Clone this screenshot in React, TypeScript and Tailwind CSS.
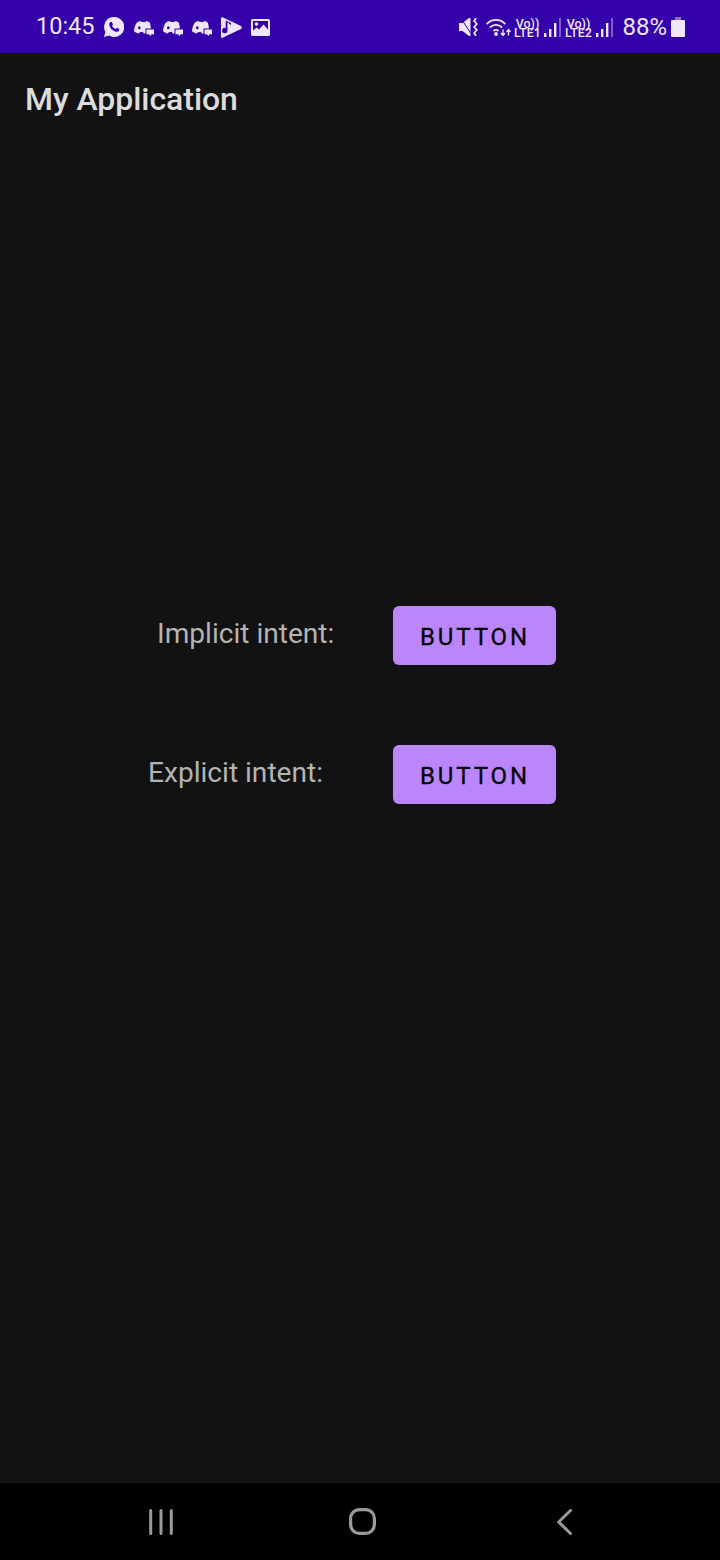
const Discord = () => (
  <svg width="20" height="15" viewBox="0 0 20 15" className="fill-[#efe6ff]">
    <path d="M3 1.500C4.600.5 5.900.1 7 0l.6 1h3.800l.6-1c1.300.1 2.600.6 3.700 1.500C16.300 3 16.800 5.300 16.900 7.500H11.500V12.500H9.800L8.800 10.800C8 11.100 6.800 11.200 6 11.100L4.800 12.500C3 12.200 1 11.300 0 10 0 7 1.300 3.500 3 1.500Z" />
    <ellipse cx="5.300" cy="6.700" rx="1.300" ry="1.500" className="fill-[#3300aa]" />
    <path d="M12.500 8.500H20V13.300H17.600L16.300 15 15 13.300H12.500Z" />
  </svg>
);

const Signal = () => (
  <svg width="17" height="19" viewBox="0 0 17 19">
    <rect x="0" y="15" width="2.400" height="4" fill="#efe6ff" />
    <rect x="5" y="11" width="2.400" height="8" fill="#efe6ff" />
    <rect x="10" y="5" width="2.400" height="14" fill="#efe6ff" />
    <rect x="15" y="0" width="2" height="19" fill="#7d5cd0" />
  </svg>
);

const VoLte = ({ label }: { label: string }) => (
  <div className="flex w-[26px] flex-col items-center pt-[2px] font-['Roboto',sans-serif] text-[12.500px] leading-[9px] font-medium text-[#efe6ff]">
    <span>Vo))</span>
    <span>{label}</span>
  </div>
);

const StatusBar = () => (
  <div className="flex h-[53px] items-center justify-between bg-[#3300aa] pt-px pr-[35px] pl-[36px] text-[#efe6ff]">
    <div className="flex items-center">
      <span className="font-['Roboto',sans-serif] text-[23.500px] leading-none">10:45</span>
      <svg width="20" height="20" viewBox="0 0 20 20" className="ml-[9px]">
        <path d="M10 0a10 10 0 0 0-8.600 15L0 20l5.200-1.400A10 10 0 1 0 10 0Z" fill="#efe6ff" />
        <path d="M6.500 5c-.8.500-1.300 1.400-1.200 2.600.3 3.400 3.500 6.700 7 7.200 1.300.2 2.300-.4 2.800-1.300l.2-1.400-2.500-1.300-1.200 1.300c-1.500-.6-2.900-1.900-3.600-3.400l1-1.200L7.900 5Z" fill="#3300aa" />
      </svg>
      <div className="ml-[10px] flex items-center gap-[9px] pt-[2px]">
        <Discord />
        <Discord />
        <Discord />
      </div>
      <svg width="21" height="21" viewBox="0 0 21 21" className="ml-[9px]">
        <path d="M0 1.500C0 .4 1 0 2 .5l18 8.500c1.200.6 1.200 2.400 0 3L2 20.500c-1 .5-2 .1-2-1Z" fill="#efe6ff" />
        <path d="M6.500 5v8.500a2.700 2.700 0 1 1-1.800-2.500V3.500l5.300 2.500v2.300Z" fill="#3300aa" />
      </svg>
      <svg width="19" height="17" viewBox="0 0 19 17" className="ml-[9px]">
        <rect width="19" height="17" rx="1.500" fill="#efe6ff" />
        <path d="M2 11.500l3.500-3 2.500 2 4.500-5 4.500 5V2H2Z" fill="#3300aa" />
        <circle cx="5.500" cy="5" r="1.800" fill="#efe6ff" />
      </svg>
    </div>
    <div className="flex items-center">
      <svg width="20" height="18" viewBox="0 0 20 18">
        <path d="M0 5h3.500L10 0h1.500v18H10L3.500 13H0Z" fill="#efe6ff" />
        <path d="M2 .5l10 15" stroke="#3300aa" strokeWidth="1" />
        <path d="M17 0l-1.800 3 2.600 3-2.600 3 2.600 3-2.600 3L17 18" stroke="#efe6ff" strokeWidth="1.800" fill="none" />
      </svg>
      <svg width="25" height="18" viewBox="0 0 25 18" className="ml-[7px]" fill="none" stroke="#efe6ff" strokeWidth="1.800">
        <path d="M.7 6C6 .6 14 .6 19.300 6" />
        <path d="M4 9.500c3.400-3.400 8.600-3.400 12 0" />
        <path d="M7.500 13c1.500-1.500 3.500-1.500 5 0" />
        <circle cx="10" cy="16" r="1" fill="#efe6ff" />
        <path d="M17 11.500v5.500M15 15l2 2.500 2-2.500M22.500 17.500v-5.500M20.500 14l2-2.500 2 2.500" strokeWidth="1.300" />
      </svg>
      <div className="ml-[3px]">
        <VoLte label="LTE1" />
      </div>
      <div className="ml-[4px]">
        <Signal />
      </div>
      <div className="ml-[4px]">
        <VoLte label="LTE2" />
      </div>
      <div className="ml-[5px]">
        <Signal />
      </div>
      <span className="ml-[9px] font-['Roboto',sans-serif] text-[24px] leading-none">88%</span>
      <svg width="14" height="20" viewBox="0 0 14 20" className="ml-[4px]">
        <path d="M4 0h6v3H4Z" fill="#8d6fd6" />
        <path d="M1 3h12a1 1 0 0 1 1 1v15a1 1 0 0 1-1 1H1a1 1 0 0 1-1-1V4a1 1 0 0 1 1-1Z" fill="#efe6ff" />
      </svg>
    </div>
  </div>
);

const IntentRow = ({ label, offset }: { label: string; offset: string }) => (
  <div className="flex items-start">
    <div className={`w-[393px] font-['Roboto',sans-serif] text-[28.100px] leading-[56px] text-[#b4b4b4] ${offset}`}>
      {label}
    </div>
    <button
      type="button"
      className="flex h-[59px] w-[163px] items-center justify-center rounded-[6px] bg-[#bb86fc] pt-[2px] pl-[1px] font-['Roboto',sans-serif] text-[24px] font-normal tracking-[2.900px] text-[#050208] [-webkit-text-stroke:0.3px_#050208]"
    >
      BUTTON
    </button>
  </div>
);

export default function App() {
  return (
    <div className="flex h-[1560px] w-[720px] flex-col bg-[#121212]">
      <StatusBar />
      <div className="flex h-[92px] items-center pl-[25px] font-['Roboto',sans-serif] text-[32px] font-medium tracking-[-0.050px] text-[#dcdcdc]">
        My Application
      </div>
      <div className="flex flex-1 flex-col gap-[80px] pt-[461px]">
        <IntentRow label="Implicit intent:" offset="pl-[157px]" />
        <IntentRow label="Explicit intent:" offset="pl-[148px]" />
      </div>
      <div className="flex h-[77px] items-center bg-black pl-[149px]">
        <svg width="24" height="26" viewBox="0 0 24 26" stroke="#9a9a9a" strokeWidth="3" strokeLinecap="round">
          <path d="M1.700 1.500v23M12 1.500v23M22.300 1.500v23" />
        </svg>
        <svg width="27" height="27" viewBox="0 0 27 27" fill="none" stroke="#9a9a9a" strokeWidth="3.200" className="ml-[176px]">
          <rect x="1.600" y="1.600" width="23.800" height="23.800" rx="9" />
        </svg>
        <svg width="15" height="26" viewBox="0 0 15 26" fill="none" stroke="#9a9a9a" strokeWidth="3" strokeLinecap="round" strokeLinejoin="round" className="ml-[181px]">
          <path d="M13.500 1.500 1.700 13l11.800 11.500" />
        </svg>
      </div>
    </div>
  );
}
